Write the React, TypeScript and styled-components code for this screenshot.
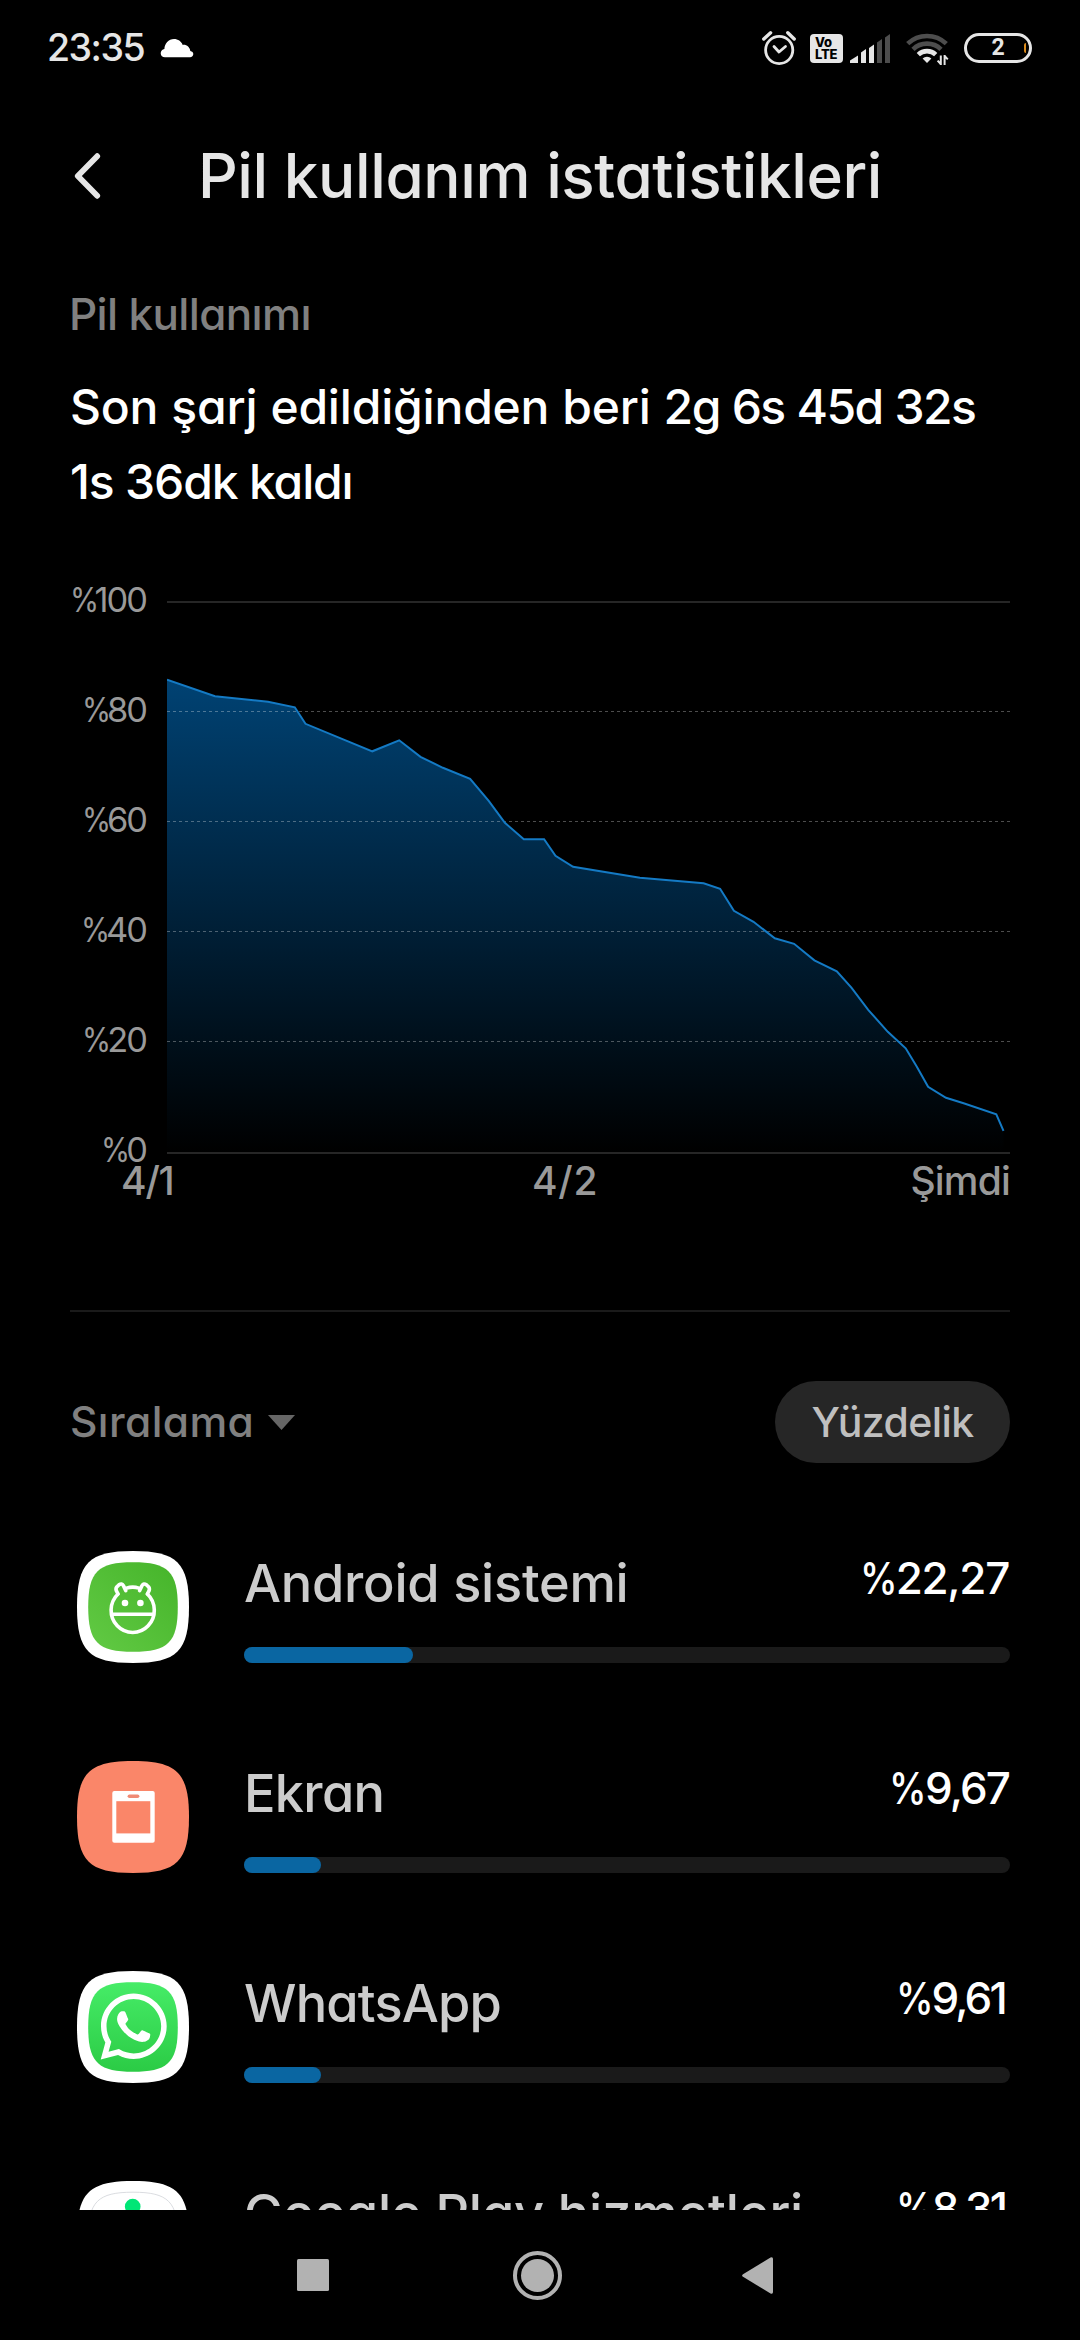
import React from "react";
import styled, { createGlobalStyle } from "styled-components";
import { FaWhatsapp } from "react-icons/fa";

const GlobalStyle = createGlobalStyle`
  * { box-sizing: border-box; }
  body {
    margin: 0;
    background: #000;
    font-family: Inter, "Noto Sans", sans-serif;
    font-weight: 500;
    font-feature-settings: "cv11" 1;
  }
`;

const Screen = styled.div`
  width: 1080px;
  height: 2340px;
  display: flex;
  flex-direction: column;
  overflow: hidden;
  background: #000;
`;

const Scroll = styled.div`
  height: 2210px;
  overflow: hidden;
`;

const StatusBar = styled.div`
  height: 96px;
  padding: 0 48px 0 47px;
  display: flex;
  align-items: center;
  color: #e6e6e6;
`;

const Clock = styled.span`
  width: 113px;
  font-size: 37.5px;
  line-height: 48px;
  letter-spacing: -1.5px;
`;

const StatusIcons = styled.div`
  margin-left: auto;
  display: flex;
  align-items: center;
`;

const StatusIcon = styled.svg<{ $gap?: number }>`
  display: block;
  overflow: visible;
  margin-left: ${(p) => p.$gap ?? 0}px;
`;

const VoLte = styled.div`
  width: 33px;
  height: 29px;
  margin-left: 14px;
  padding: 2px 0 0 5px;
  border-radius: 4px;
  background: #e6e6e6;
  color: #000;
  font-size: 13px;
  font-weight: 800;
  line-height: 12.5px;
  letter-spacing: -0.2px;
`;

const Battery = styled.div`
  position: relative;
  width: 68px;
  height: 30px;
  margin-left: 15px;
  display: flex;
  align-items: center;
  justify-content: center;
  border: 3px solid #e6e6e6;
  border-radius: 15px;
  font-family: Roboto, sans-serif;
  font-size: 23px;
  font-weight: 700;
  line-height: 24px;
`;

const BatteryLevel = styled.span`
  position: absolute;
  right: 3px;
  top: 7px;
  width: 2px;
  height: 10px;
  border-radius: 2px 0 0 2px;
  background: #d98a1c;
`;

const Header = styled.header`
  height: 160px;
  padding-left: 71px;
  display: flex;
  align-items: center;
  gap: 95px;
`;

const Title = styled.h1`
  margin: 0;
  font-size: 62px;
  font-weight: 500;
  line-height: 80px;
  letter-spacing: -0.42px;
  color: #e6e6e6;
`;

const Content = styled.main`
  padding: 28px 70px 0;
`;

const SectionLabel = styled.h2`
  margin: 0 0 25px -1px;
  font-size: 44px;
  font-weight: 500;
  line-height: 60px;
  letter-spacing: -0.65px;
  color: #808080;
`;

const SummaryLine = styled.p<{ $tracking: number; $wordGap?: number }>`
  margin: 0;
  font-size: 48px;
  line-height: 75px;
  white-space: nowrap;
  letter-spacing: ${(p) => p.$tracking}px;
  word-spacing: ${(p) => p.$wordGap ?? 0}px;
  color: #fff;
`;

const SummaryTime = styled.span`
  letter-spacing: -1.5px;
`;

const ChartArea = styled.div`
  margin-top: 61px;
  height: 590px;
  display: flex;
  gap: 22px;
`;

const PercentAxis = styled.div`
  width: 75px;
  display: flex;
  flex-direction: column;
  justify-content: space-between;
  align-items: flex-end;
`;

const AxisLabel = styled.span`
  font-size: 34.4px;
  font-weight: 400;
  line-height: 40px;
  letter-spacing: -2px;
  margin-right: -1px;
  white-space: nowrap;
  color: #999;
`;

const PercentSign = styled.span<{ $width: number }>`
  display: inline-block;
  width: ${(p) => p.$width}px;
  transform: scaleX(0.86);
  transform-origin: left;
`;

const Plot = styled.svg`
  display: block;
  width: 843px;
  height: 590px;
`;

const DateAxis = styled.div`
  margin: -9px 0 0 51px;
  display: grid;
  grid-template-columns: 411px 1fr auto;
  font-size: 39px;
  line-height: 40px;
  color: #999;
`;

const DateLabel = styled.span<{ $tracking?: number }>`
  letter-spacing: ${(p) => p.$tracking ?? 0}px;
`;

const Divider = styled.hr`
  margin: 109px 0 69px;
  height: 2px;
  border: 0;
  background: #1a1a1a;
`;

const SortRow = styled.div`
  height: 82px;
  display: flex;
  align-items: center;
  justify-content: space-between;
`;

const SortButton = styled.button`
  padding: 0;
  border: 0;
  background: none;
  display: flex;
  align-items: center;
  gap: 14px;
  font: inherit;
  font-size: 42.5px;
  line-height: 60px;
  letter-spacing: 0.4px;
  color: #808080;
`;

const Chip = styled.button`
  width: 235px;
  height: 82px;
  padding: 0;
  border: 0;
  border-radius: 41px;
  background: #262626;
  color: #bfbfbf;
  font: inherit;
  font-size: 41px;
  line-height: 82px;
  letter-spacing: -0.6px;
`;

const AppList = styled.div`
  margin-top: 39px;
`;

const AppRow = styled.div`
  height: 210px;
  padding: 49px 0 0 7px;
  display: flex;
  gap: 55px;
`;

const AppIcon = styled.svg`
  display: block;
  flex: none;
  width: 112px;
  height: 112px;
`;

const AppInfo = styled.div`
  flex: 1;
  padding-top: 2px;
`;

const AppLine = styled.div`
  height: 60px;
  display: flex;
  justify-content: space-between;
  align-items: flex-start;
  white-space: nowrap;
`;

const AppName = styled.span<{ $tracking: number }>`
  font-size: 52.3px;
  line-height: 60px;
  letter-spacing: ${(p) => p.$tracking}px;
  color: #ccc;
`;

const AppValue = styled.span<{ $tracking: number; $inset: number }>`
  margin-right: ${(p) => p.$inset}px;
  font-size: 44px;
  line-height: 50px;
  letter-spacing: ${(p) => p.$tracking}px;
  color: #fff;
`;

const Track = styled.div`
  margin-top: 34px;
  height: 16px;
  border-radius: 8px;
  background: #1a1a1a;
`;

const Fill = styled.div`
  height: 16px;
  border-radius: 8px;
  background: #0a66a2;
`;

const NavBar = styled.nav`
  height: 130px;
  display: flex;
  align-items: center;
  padding-left: 297px;
`;

const NavIcon = styled.svg<{ $gap?: number }>`
  display: block;
  margin-left: ${(p) => p.$gap ?? 0}px;
  fill: #b2b2b2;
`;

const SQUIRCLE =
  "M56 0C100 0 112 12 112 56C112 100 100 112 56 112C12 112 0 100 0 56C0 12 12 0 56 0Z";
const INNER = "translate(11.2 11.2) scale(0.8)";

const AndroidIcon = () => (
  <AppIcon viewBox="0 0 112 112">
    <defs>
      <linearGradient id="android" x1="0" y1="1" x2="1" y2="0">
        <stop offset="0" stopColor="#62ca44" />
        <stop offset="1" stopColor="#45b42a" />
      </linearGradient>
    </defs>
    <path d={SQUIRCLE} fill="#fff" />
    <path d={SQUIRCLE} fill="url(#android)" transform={INNER} />
    <g fill="none" stroke="#fff" strokeWidth="3.6" strokeLinecap="round" strokeLinejoin="round">
      <path d="M41 43A21.6 22.2 0 1 0 70.400 43" />
      <path d="M49.500 37.100Q55.700 35.200 61.900 37.100" />
      <path d="M41 43L39.200 39.400Q38.400 37 40.600 35.200L42 33.800Q44.800 31.800 46.400 34.600L48.800 39.600" />
      <path d="M70.400 43L72.200 39.400Q73 37 70.800 35.200L69.400 33.800Q66.600 31.800 65 34.600L62.600 39.600" />
      <path d="M35 63.200H76.400" strokeLinecap="butt" />
    </g>
    <circle cx="48" cy="52" r="3.3" fill="#fff" />
    <circle cx="63.4" cy="52" r="3.3" fill="#fff" />
  </AppIcon>
);

const DisplayIcon = () => (
  <AppIcon viewBox="0 0 112 112">
    <path d={SQUIRCLE} fill="#fa8669" />
    <rect x="35.3" y="30" width="42.4" height="51.7" rx="2" fill="#fff" />
    <rect x="39.3" y="40.2" width="34" height="32.2" fill="#fa8669" />
    <rect x="50.6" y="33.4" width="11.8" height="3.6" rx="1.8" fill="#f08a74" />
  </AppIcon>
);

const WhatsAppIcon = () => (
  <AppIcon viewBox="0 0 112 112">
    <defs>
      <linearGradient id="whatsapp" x1="0" y1="0" x2="0" y2="1">
        <stop offset="0" stopColor="#46ec67" />
        <stop offset="1" stopColor="#2bcb45" />
      </linearGradient>
    </defs>
    <path d={SQUIRCLE} fill="#fff" />
    <path d={SQUIRCLE} fill="url(#whatsapp)" transform={INNER} />
    <FaWhatsapp x="19" y="17.8" size="75.4" color="#fff" />
  </AppIcon>
);

const PlayServicesIcon = () => (
  <AppIcon viewBox="0 0 112 112">
    <path d={SQUIRCLE} fill="#fff" />
    <path d={SQUIRCLE} fill="#fff" stroke="#d0d3d8" strokeWidth="1" transform={INNER} />
    <circle cx="55.7" cy="25.5" r="7.8" fill="#00e676" />
  </AppIcon>
);

const LEVELS: [number, number][] = [
  [0, 86], [48, 83], [101, 82], [127.8, 81], [138.5, 78], [205.3, 73], [232.2, 75],
  [253.5, 72], [275.9, 70], [303.1, 68], [321.7, 64], [337.9, 60], [356.8, 57],
  [377.1, 57], [388.5, 54], [406.1, 52], [472.9, 50], [536.6, 49], [553.1, 48],
  [566.9, 44], [586.5, 42], [607.8, 39], [627.1, 38], [647.4, 35], [669.8, 33],
  [684.6, 30], [701.2, 26], [720.8, 22], [738.7, 19], [749.7, 15.7], [761.1, 12],
  [779, 10], [796.6, 9], [829.3, 7], [836.5, 4],
];

const levelPoints = LEVELS.map(([x, v]) => `${x},${(22.8 + (100 - v) * 5.5).toFixed(1)}`).join(" ");

const BatteryChart = () => (
  <Plot viewBox="0 0 843 590">
    <defs>
      <linearGradient id="level" gradientUnits="userSpaceOnUse" x1="0" y1="100" x2="0" y2="572">
        <stop offset="0" stopColor="#004273" />
        <stop offset="1" stopColor="#000" />
      </linearGradient>
    </defs>
    <rect y="21" width="843" height="2" fill="#262626" />
    <polygon points={`0,572 ${levelPoints} 836.5,572`} fill="url(#level)" />
    {[131.5, 241.5, 351.5, 461.5].map((y) => (
      <path key={y} d={`M0 ${y}H843`} stroke="#fff" strokeOpacity="0.3" strokeDasharray="3 3" />
    ))}
    <polyline points={levelPoints} fill="none" stroke="#147ac4" strokeWidth="2" />
    <rect y="572" width="843" height="2" fill="#262626" />
  </Plot>
);

const APPS = [
  { name: "Android sistemi", tracking: -0.25, value: "22,27", valueTracking: -1.3, inset: 1, fill: 169, Icon: AndroidIcon },
  { name: "Ekran", tracking: -0.7, value: "9,67", valueTracking: -1.9, inset: 1, fill: 77, Icon: DisplayIcon },
  { name: "WhatsApp", tracking: -0.8, value: "9,61", valueTracking: -2.8, inset: 5, fill: 77, Icon: WhatsAppIcon },
  { name: "Google Play hizmetleri", tracking: -0.15, value: "8,31", valueTracking: -2.9, inset: 5, fill: 66, Icon: PlayServicesIcon },
];

export default function App() {
  return (
    <Screen>
      <GlobalStyle />
      <Scroll>
        <StatusBar>
          <Clock>23:35</Clock>
          <StatusIcon width="34" height="20" viewBox="0 0 34 20">
            <path
              d="M5 19.3C2.5 19.3 .7 17.6 .7 15.2C.7 13 2.2 11.3 4.4 11C4.5 5.6 8.6 1 14 1C18 1 21.2 3.3 22.7 6.9C26.7 6.4 29.8 9.2 30.3 12.9C32.2 13.2 33.3 14.5 33.3 16.1C33.3 18 31.9 19.3 30 19.3Z"
              fill="#fff"
            />
          </StatusIcon>
          <StatusIcons>
            <StatusIcon width="34" height="34" viewBox="0 0 34 34">
              <g fill="none" stroke="#e6e6e6" strokeLinecap="round" strokeLinejoin="round">
                <circle cx="17.2" cy="19" r="13.6" strokeWidth="2.8" />
                <path d="M12 15.5L17 21L23.5 15.5" strokeWidth="2.8" />
                <path d="M1.8 8L8.6 1.8M32.2 8L25.8 1.8" strokeWidth="3.4" />
              </g>
            </StatusIcon>
            <VoLte>
              <div>Vo</div>
              <div>LTE</div>
            </VoLte>
            <StatusIcon $gap={7} width="40" height="29" viewBox="0 0 40 29">
              <path d="M0 29V26.5L8 21.5V29Z" fill="#e6e6e6" />
              <path d="M11 29V18.5L16 15V29Z" fill="#e6e6e6" />
              <path d="M19 29V14L24 10.5V29Z" fill="#e6e6e6" />
              <path d="M27 29V8.5L32 5V29Z" fill="#4d4d4d" />
              <path d="M35 29V3.5L40 0V29Z" fill="#4d4d4d" />
            </StatusIcon>
            <StatusIcon $gap={16} width="43" height="33" viewBox="0 0 43 33">
              <g fill="none" strokeWidth="4.6">
                <path d="M1.7 11.7A28 28 0 0 1 40.3 11.7" stroke="#4d4d4d" />
                <path d="M7 17.3A20 20 0 0 1 35 17.3" stroke="#4d4d4d" />
                <path d="M12.3 22.6A12.5 12.5 0 0 1 29.7 22.6" stroke="#e6e6e6" />
              </g>
              <path d="M21 31L16.6 26.6A6.2 6.2 0 0 1 25.4 26.6Z" fill="#e6e6e6" />
              <path
                d="M34.8 33V23.5M34.8 32L31.6 28.6M38.6 23V33M38.6 24L41.8 27.4"
                stroke="#e6e6e6"
                strokeWidth="2"
                fill="none"
              />
            </StatusIcon>
            <Battery>
              2<BatteryLevel />
            </Battery>
          </StatusIcons>
        </StatusBar>

        <Header>
          <svg width="32" height="48" viewBox="0 0 32 48">
            <path
              d="M26.2 4.2L6.8 24L26.2 43.8"
              fill="none"
              stroke="#e6e6e6"
              strokeWidth="5.8"
              strokeLinecap="round"
              strokeLinejoin="round"
            />
          </svg>
          <Title>Pil kullanım istatistikleri</Title>
        </Header>

        <Content>
          <SectionLabel>Pil kullanımı</SectionLabel>
          <SummaryLine $tracking={-0.2} $wordGap={0.4}>
            Son şarj edildiğinden beri <SummaryTime>2g 6s 45d 32s</SummaryTime>
          </SummaryLine>
          <SummaryLine $tracking={-1.15}>1s 36dk kaldı</SummaryLine>

          <ChartArea>
            <PercentAxis>
              {[100, 80, 60, 40, 20, 0].map((v) => (
                <AxisLabel key={v}>
                  <PercentSign $width={25}>%</PercentSign>
                  {v}
                </AxisLabel>
              ))}
            </PercentAxis>
            <BatteryChart />
          </ChartArea>
          <DateAxis>
            <DateLabel $tracking={-1.2}>4/1</DateLabel>
            <DateLabel $tracking={0.7}>4/2</DateLabel>
            <DateLabel $tracking={-0.8}>Şimdi</DateLabel>
          </DateAxis>

          <Divider />

          <SortRow>
            <SortButton>
              Sıralama
              <svg width="27" height="15" viewBox="0 0 27 15">
                <path d="M0 0H27L13.5 15Z" fill="#666" />
              </svg>
            </SortButton>
            <Chip>Yüzdelik</Chip>
          </SortRow>

          <AppList>
            {APPS.map(({ name, tracking, value, valueTracking, inset, fill, Icon }) => (
              <AppRow key={name}>
                <Icon />
                <AppInfo>
                  <AppLine>
                    <AppName $tracking={tracking}>{name}</AppName>
                    <AppValue $tracking={valueTracking} $inset={inset}>
                      <PercentSign $width={36}>%</PercentSign>
                      {value}
                    </AppValue>
                  </AppLine>
                  <Track>
                    <Fill style={{ width: fill }} />
                  </Track>
                </AppInfo>
              </AppRow>
            ))}
          </AppList>
        </Content>
      </Scroll>

      <NavBar>
        <NavIcon width="32" height="32" viewBox="0 0 32 32">
          <rect width="32" height="32" rx="1.5" />
        </NavIcon>
        <NavIcon $gap={184} width="49" height="49" viewBox="0 0 49 49">
          <circle cx="24.5" cy="24.5" r="22.5" fill="none" stroke="#b2b2b2" strokeWidth="4" />
          <circle cx="24.5" cy="24.5" r="16.5" />
        </NavIcon>
        <NavIcon $gap={180} width="31" height="37" viewBox="0 0 31 37">
          <path d="M28.5 .5Q31 -.5 31 2V35Q31 37.5 28.5 36.5L1 19.8Q-.8 18.5 1 17.2Z" />
        </NavIcon>
      </NavBar>
    </Screen>
  );
}
